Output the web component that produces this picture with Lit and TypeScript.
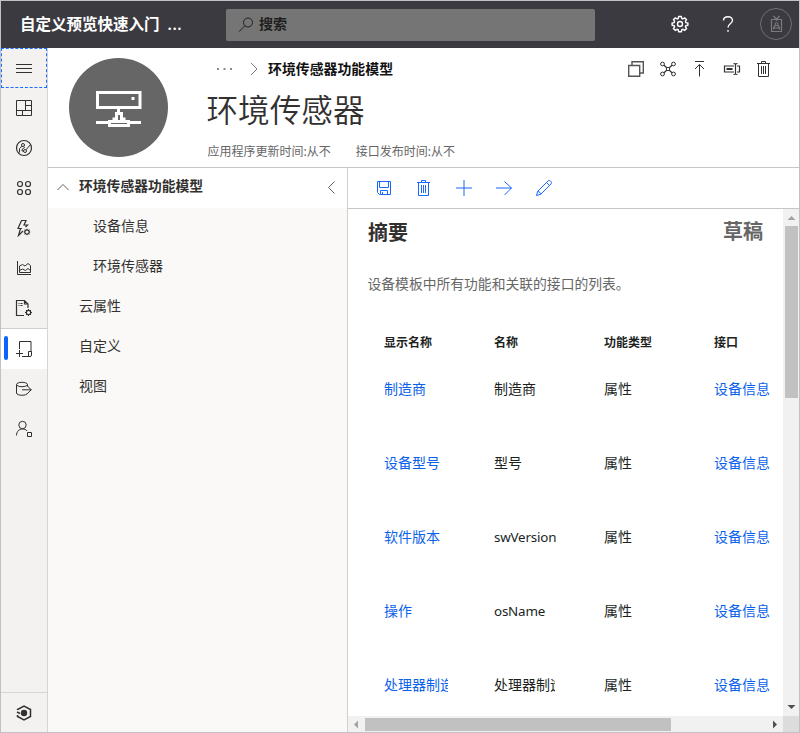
import { LitElement, html, css, svg, nothing } from "lit";
import { customElement, property } from "lit/decorators.js";
import { classMap } from "lit/directives/class-map.js";

const icons: Record<string, unknown> = {
  menu: svg`<path d="M1 5.500h16M1 9.500h16M1 13.500h16"/>`,
  dashboard: svg`<path d="M1.500 1.500h15v15h-15zM10.500 1.500v10M1.500 11.500h15M10.500 6.500h6M7.500 11.500v5"/>`,
  devices: svg`<circle cx="9" cy="9" r="7.500" stroke-width="1.200"/><circle cx="8" cy="6" r="1.500"/><circle cx="10" cy="12" r="1.500"/><path d="M7 7.200L4.500 9.500v3.500L3.500 14M11 10.800L15.500 5.500M9 7.500L9.500 8.500 7 10.500v1.500h1.500"/>`,
  groups: svg`<g stroke-width="1.200"><circle cx="5" cy="5" r="2.500"/><circle cx="13" cy="5" r="2.500"/><circle cx="5" cy="13" r="2.500"/><circle cx="13" cy="13" r="2.500"/></g>`,
  rules: svg`<path stroke-width="1.200" d="M7 9.500H3L6.500 1.500H11L9 6h3.500L10.500 8M5.500 9.500L3.500 16.500 8 12"/><circle cx="12" cy="13" r="2.200" stroke-width="1.200"/><path d="M12 9.800v1M12 15.200v1M8.800 13h1M14.200 13h1M9.700 10.700l.8.8M13.500 14.500l.8.8M9.700 15.300l.8-.8M13.500 11.500l.8-.8"/>`,
  analytics: svg`<path d="M2.500 2v13.500h13.500"/><path d="M4.500 13.500V7l3-1.500 2.500 1.500 3-2.500 2.500 2v7zM4.500 11.500l3-1.500 3 1.500 2.500-2 2.500 2"/>`,
  jobs: svg`<path stroke-width="1.200" d="M9 16.500H1.500v-15h8l3.500 3.500v4M9.500 1.500V5H13M3.500 4.500h1M5.500 4.500h2M3.500 6.500h1M5.500 6.500h2"/><circle cx="13.500" cy="13.500" r="2.200" stroke-width="1.200"/><path d="M13.500 10v1.500M13.500 15.500V17M10 13.500h1.500M15.500 13.500H17M11 11l1 1M15 15l1 1M16 11l-1 1M11 16l1-1"/>`,
  templates: svg`<path d="M4.500 9V1.500h11.500V12M1 13.500h7M4.500 10v7M7 16.500h8M13.500 16.500v-5h3v3.500q0 1.500-1.500 1.500z"/>`,
  exportData: svg`<ellipse cx="7" cy="4.500" rx="5.500" ry="2.200"/><path d="M1.500 4.500v8.500c0 3 11 3 11 0M12.500 4.500v2"/><path d="M7 9.800h9.500M12.500 6l3.700 3.800-3.700 3.700"/>`,
  admin: svg`<circle cx="7.500" cy="5" r="3.700"/><path d="M1.500 15.500c0-4 2.500-6.500 6-6.500 2 0 3.500.5 4.500 2M12.500 12.500h4v4h-4z"/>`,
  central: svg`<path d="M2.500 6V5.500L9 2l6.500 3.500v7L9 16l-6.500-3.500v-1.500M2 8l3 1.500" stroke-width="1.500"/><circle cx="9" cy="9" r="3.200" fill="currentColor" stroke="none"/>`,
  search: svg`<circle cx="11" cy="6.500" r="4.500"/><path d="M7.800 9.800L2 15.700"/>`,
  gear: svg`<path stroke-width="1.400" d="M7.700 1.500h2.600l.5 2 1 .5 1.900-1.100 1.800 1.800-1.100 1.900.5 1 2 .4v2.200l-2 .5-.5 1 1.100 1.900-1.800 1.800-1.900-1.100-1 .5-.5 2H7.700l-.5-2-1-.5-1.900 1.100-1.800-1.800 1.100-1.900-.5-1-2-.5V8l2-.4.5-1-1.100-1.900 1.800-1.800L6.200 4l1-.5z"/><circle cx="9" cy="9" r="2.500" stroke-width="1.400"/>`,
  help: svg`<path stroke-width="1.400" d="M4.500 5.500C4.500 3 6.300 1.700 9 1.700s4.500 1.400 4.500 3.600c0 3.500-4.500 3.500-4.500 7.200M9 15v1.800"/>`,
  badge: svg`<path d="M4.500 4.500h10v12h-10zM6.500 1l3 3.500 3-3.500M9.500 3v3M6.500 14.500V13l1.500-2.500h3l1.500 2.500v1.500M7 13h5" stroke-width="1.200"/><circle cx="9.500" cy="9" r="1.500"/>`,
  copy: svg`<path stroke-width="1.400" d="M1.700 5.500h11v10.800h-11zM5 5V1.700h11.300v11.300h-3"/>`,
  network: svg`<circle cx="3.500" cy="4" r="1.900"/><circle cx="14.500" cy="4" r="1.900"/><circle cx="3.500" cy="14" r="1.900"/><circle cx="14.500" cy="14" r="1.900"/><circle cx="9" cy="9" r="1.700"/><path stroke-width="1.200" d="M5 5.200l2.700 2.500M13 5.200l-2.700 2.500M5 12.800l2.700-2.500M13 12.800l-2.700-2.500"/>`,
  publish: svg`<path d="M4 1.500h9M8.500 4.500v12M4 9l4.500-4.500L13 9"/>`,
  rename: svg`<path stroke-width="1.200" d="M11 6H1.500v6H11M14 6h2.500v6H14M12.500 4v10M10.500 3.500q1.500 0 2 .8.500-.8 2-.8M10.500 14.500q1.500 0 2-.8.500.8 2 .8"/><path d="M3.500 9h6" stroke-width="2"/>`,
  trash: svg`<path d="M2 3.500h13M6.500 3.500v-2h4v2M3.500 3.500v13h10v-13M6.500 6v8M8.500 6v8M10.500 6v8"/>`,
  save: svg`<path d="M2.500 2.500h13v13h-11l-2-2zM4.500 2.500v6h9v-6M5.500 15.500v-4h7v4M7.500 13v2.500"/>`,
  plus: svg`<path d="M1 9h16M9 1v16"/>`,
  arrow: svg`<path d="M1 9h15.500M9.500 2.500L16.500 9l-7 7"/>`,
  pencil: svg`<path d="M1.500 16.500l1.200-4.200L13 2c1.500-1.500 4.500 1 3 3L5.700 15.300zM2.700 12.300q2.500.3 3 3M11.500 3.500l3 3"/>`,
  chevronUp: svg`<path d="M3.500 12L9 6.500l5.500 5.500"/>`,
  chevronLeft: svg`<path d="M12.500 3.500L6.500 9.500l6 6"/>`,
  chevronRight: svg`<path d="M6 3l6 6-6 6"/>`,
  more: svg`<path d="M2 9h2M8.500 9h2M15 9h2" stroke-width="1.500"/>`,
};

@customElement("ui-icon")
class UiIcon extends LitElement {
  @property() name = "";
  static styles = css`
    :host { display: block; width: 18px; height: 18px; flex: none; }
    svg { display: block; width: 18px; height: 18px; fill: none; stroke: currentColor; stroke-width: 1; }
  `;
  render() {
    return html`<svg viewBox="0 0 18 18">${icons[this.name] ?? nothing}</svg>`;
  }
}

@customElement("nav-rail")
class NavRail extends LitElement {
  static styles = css`
    :host { display: flex; flex-direction: column; width: 46px; flex: none; background: #f3f2f1; border-right: 1px solid #d6d5d4; color: #323130; }
    .item { height: 40px; flex: none; display: flex; align-items: center; justify-content: center; position: relative; box-sizing: border-box; }
    .focus { border: 1px dashed #1a6dff; }
    .active { height: 41px; border-top: 1px solid #d2d0ce; background: #fff; }
    .active::before { content: ""; position: absolute; left: 3px; top: 7px; width: 4px; height: 24px; border-radius: 2px; background: #0f62fe; }
    .bottom { margin-top: auto; border-top: 1px solid #d6d5d4; }
  `;
  render() {
    const names = ["menu", "dashboard", "devices", "groups", "rules", "analytics", "jobs", "templates", "exportData", "admin", "central"];
    return names.map((n) => html`<div class=${classMap({ item: true, focus: n === "menu", active: n === "templates", bottom: n === "central" })}><ui-icon name=${n}></ui-icon></div>`);
  }
}

@customElement("app-root")
class AppRoot extends LitElement {
  static styles = css`
    :host { display: flex; flex-direction: column; width: 800px; height: 733px; box-sizing: border-box; border: 1px solid #c1c1c1; background: #fff; color: #323130; overflow: hidden; font: 14px/20px "Noto Sans", "Noto Sans CJK SC", sans-serif; white-space: nowrap; }
    .top { height: 47px; flex: none; background: #3b3a40; color: #fff; display: flex; align-items: center; }
    .brand { width: 206px; padding: 0 0 2px 19px; font-size: 15.500px; font-weight: 600; }
    .brand span { margin-left: 8px; letter-spacing: 0.6px; }
    .search { width: 369px; height: 32px; border-radius: 2px; background: #757575; color: #201f1e; display: flex; align-items: center; gap: 4px; padding: 0 0 2px 11px; box-sizing: border-box; font-weight: 600; }
    .search ui-icon { margin-top: 2px; }
    .tools { margin-left: auto; display: flex; align-items: center; gap: 30px; padding: 0 7px 2px 0; }
    .avatar { width: 30px; height: 30px; border: 1px solid #706f74; border-radius: 50%; color: #7b7a7e; display: flex; align-items: center; justify-content: center; margin-left: -7px; }
    .body { flex: 1; min-height: 0; display: flex; }
    .main { flex: 1; min-width: 0; display: flex; flex-direction: column; }
    .header { height: 119px; flex: none; border-bottom: 1px solid #c8c6c4; display: flex; padding-left: 20px; }
    .disc { width: 99px; height: 99px; margin: 10px 0 0 0.5px; border-radius: 50%; background: #666; flex: none; }
    .disc svg { display: block; fill: none; stroke: #fff; stroke-width: 3; }
    .info { margin-left: 39.500px; flex: 1; display: flex; flex-direction: column; }
    .crumbs { height: 42px; display: flex; align-items: center; }
    .crumbs .dots { margin-left: 8px; margin-right: 12px; color: #5b6570; }
    .crumbs .sep { color: #7a7978; margin-right: 5px; }
    .crumbs b { font-weight: 600; color: #111; font-size: 13.900px; }
    .cmds { margin-left: auto; padding-right: 26px; display: flex; gap: 14px; }
    .cmds :first-child { color: #555; }
    h1 { margin: -1px 0 0 -0.5px; font-size: 31.600px; font-weight: 350; line-height: 42px; }
    .meta { margin-top: 11px; display: flex; gap: 25px; font-size: 12px; color: #666; margin-left: 0.5px; }
    .split { flex: 1; min-height: 0; display: flex; }
    .tree { width: 299px; flex: none; background: #faf9f8; border-right: 1px solid #d2d0ce; }
    .row { height: 40px; display: flex; align-items: center; padding-left: 31px; padding-bottom: 4px; box-sizing: border-box; }
    .row.sub { padding-left: 45px; }
    .row.head { background: #fff; padding: 0 7px 4px 6px; font-weight: 600; }
    .row.head b { font-weight: 600; font-size: 13.800px; margin-left: 7px; flex: 1; }
    .row.head ui-icon { color: #605e5c; margin-top: 2px; }
    .detail { flex: 1; min-width: 0; display: flex; flex-direction: column; }
    .bar { height: 40px; flex: none; display: flex; align-items: center; gap: 22px; padding-left: 27px; color: #1a66ff; border-bottom: 1px solid #c8c6c4; }
    .scroll { flex: 1; min-height: 0; display: grid; grid-template: minmax(0, 1fr) 16px / minmax(0, 1fr) 16px; }
    .pane { overflow: hidden; padding: 10px 0 0 20px; }
    .title { display: flex; justify-content: space-between; padding-right: 20px; font-size: 20px; font-weight: 600; line-height: 28px; }
    .title .draft { color: #666; margin-top: -1px; }
    .desc { margin-top: 27px; margin-left: -0.5px; color: #666; font-size: 13.800px; }
    .thead, .tr { display: grid; grid-template-columns: 110px 110px 110px 57px; padding-left: 16px; align-items: center; }
    .thead { margin-top: 39px; height: 20px; font-size: 12px; font-weight: 600; color: #201f1e; }
    .tr { height: 74px; color: #201f1e; }
    .rows { margin-top: -1px; }
    .clip { width: 64px; overflow: hidden; }
    .clip.name { width: 61px; }
    .clip.latin { width: auto; font-size: 13.400px; letter-spacing: -0.2px; }
    .link { color: #0b62ea; }
    .vbar { background: #f1f1f1; display: flex; flex-direction: column; align-items: center; }
    .hbar { background: #f1f1f1; display: flex; align-items: center; }
    .btn { width: 16px; height: 17px; flex: none; display: block; }
    .vthumb { width: 13px; height: 172px; background: #c1c1c1; }
    .hthumb { height: 13px; width: 306px; margin-left: 1px; background: #c1c1c1; }
    .last { margin-top: auto; }
    .hbar .last { margin: 0 0 0 auto; }
    .corner { background: #dcdcdc; }
  `;
  render() {
    const rows = [["制造商", "制造商"], ["设备型号", "型号"], ["软件版本", "swVersion"], ["操作", "osName"], ["处理器制造商", "处理器制造商"]];
    const icon = (name: string) => html`<ui-icon name=${name}></ui-icon>`;
    return html`
      <div class="top">
        <div class="brand">自定义预览快速入门<span>...</span></div>
        <div class="search">${icon("search")}搜索</div>
        <div class="tools">${icon("gear")}${icon("help")}<div class="avatar">${icon("badge")}</div></div>
      </div>
      <div class="body">
        <nav-rail></nav-rail>
        <div class="main">
          <div class="header">
            <div class="disc"><svg width="99" height="99"><path d="M28.500 34.500h42.500v15h-42.500zM27 64.500h14M59 64.500h13M40.500 63.500h19v4h-19zM49.500 50v5M47.500 63v-7.500h5V63M45 59.500v4M55 59.500v4"/><path d="M62.500 40.500h3"/></svg></div>
            <div class="info">
              <div class="crumbs"><ui-icon class="dots" name="more"></ui-icon><ui-icon class="sep" name="chevronRight"></ui-icon><b>环境传感器功能模型</b>
                <div class="cmds">${["copy", "network", "publish", "rename", "trash"].map(icon)}</div>
              </div>
              <h1>环境传感器</h1>
              <div class="meta"><span>应用程序更新时间:从不</span><span>接口发布时间:从不</span></div>
            </div>
          </div>
          <div class="split">
            <div class="tree">
              <div class="row head">${icon("chevronUp")}<b>环境传感器功能模型</b>${icon("chevronLeft")}</div>
              <div class="row sub">设备信息</div>
              <div class="row sub">环境传感器</div>
              ${["云属性", "自定义", "视图"].map((t) => html`<div class="row">${t}</div>`)}
            </div>
            <div class="detail">
              <div class="bar">${["save", "trash", "plus", "arrow", "pencil"].map(icon)}</div>
              <div class="scroll">
                <div class="pane">
                  <div class="title"><span>摘要</span><span class="draft">草稿</span></div>
                  <div class="desc">设备模板中所有功能和关联的接口的列表。</div>
                  <div class="thead"><span>显示名称</span><span>名称</span><span>功能类型</span><span>接口</span></div>
                  <div class="rows">${rows.map(([a, b]) => html`<div class="tr"><span class="clip link">${a}</span><span class=${classMap({ clip: true, name: true, latin: /^[a-z]/.test(b) })}>${b}</span><span>属性</span><span class="link">设备信息</span></div>`)}</div>
                </div>
                <div class="vbar">
                  <svg class="btn" viewBox="0 0 16 17"><path d="M4.500 11h8l-4-4z" fill="#a3a3a3"/></svg>
                  <div class="vthumb"></div>
                  <svg class="btn last" viewBox="0 0 16 17"><path d="M4.500 6h8l-4 4z" fill="#505050"/></svg>
                </div>
                <div class="hbar">
                  <svg class="btn" viewBox="0 0 16 17"><path d="M10 4.500v8l-4-4z" fill="#a3a3a3"/></svg>
                  <div class="hthumb"></div>
                  <svg class="btn last" viewBox="0 0 16 17"><path d="M6 4.500v8l4-4z" fill="#505050"/></svg>
                </div>
                <div class="corner"></div>
              </div>
            </div>
          </div>
        </div>
      </div>`;
  }
}
